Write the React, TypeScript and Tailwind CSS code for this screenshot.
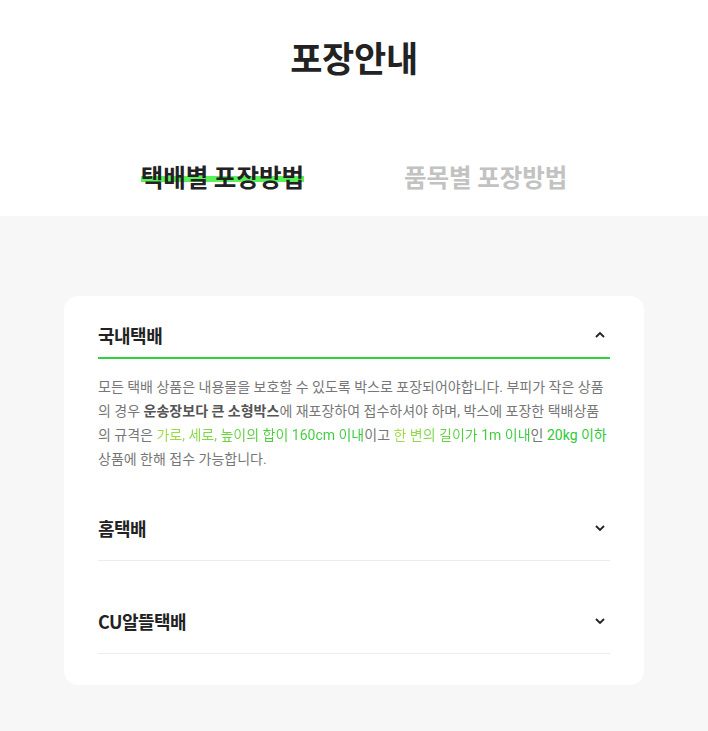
import React, { useState } from "react";

const KR = "font-['Noto_Sans_CJK_KR',sans-serif]";

const items = [
  { id: "domestic", title: "국내택배" },
  { id: "home", title: "홈택배" },
  { id: "cu", title: "CU알뜰택배" },
];

function Chevron({ open }: { open: boolean }) {
  return (
    <svg
      width="12"
      height="12"
      viewBox="0 0 12 12"
      fill="none"
      stroke="#222"
      strokeWidth="1.8"
      className={open ? "rotate-180" : ""}
    >
      <path d="M2 4l4 4 4-4" />
    </svg>
  );
}

export default function App() {
  const [tab, setTab] = useState(0);
  const [open, setOpen] = useState<string>("domestic");

  // highlighted spec text: soft yellow-green fading into green
  const green =
    "bg-gradient-to-r from-[#a6dc4c] via-[#4fcf3c] to-[#2fc93a] bg-clip-text text-transparent";

  return (
    <div className={`min-h-screen w-full bg-[#f7f7f7] ${KR}`}>
      {/* Top title + tabs */}
      <div className="bg-white">
        <h1 className="pt-[33px] text-center text-[35px] font-bold leading-[48px] tracking-[-0.3px] text-[#222]">
          포장안내
        </h1>
        <div className="mt-[75px] flex h-[60px] justify-center gap-[100px] pt-[4px]">
          {["택배별 포장방법", "품목별 포장방법"].map((t, i) => (
            <button
              key={t}
              onClick={() => setTab(i)}
              className={`relative h-fit text-[24.5px] font-bold leading-[34px] ${
                tab === i ? "text-[#222]" : "text-[#c2c2c2]"
              }`}
            >
              {tab === i && (
                <span className="absolute left-0 right-0 top-[16px] h-[6px] bg-[#5af05a]" />
              )}
              <span className="relative">{t}</span>
            </button>
          ))}
        </div>
      </div>

      {/* Accordion card */}
      <div className="px-[64px] pb-[46px] pt-[80px]">
        <div className="rounded-[14px] bg-white px-[34px] pb-[31px]">
          {items.map((item, idx) => {
            const isOpen = open === item.id;
            return (
              <div key={item.id}>
                <button
                  onClick={() => setOpen(isOpen ? "" : item.id)}
                  className={`flex w-full items-center justify-between ${
                    isOpen ? "pb-[9px]" : "pb-[19px]"
                  } ${idx === 0 ? "pt-[26px]" : idx === 1 ? "pt-[44px]" : "pt-[47px]"}`}
                >
                  <span className="text-[18px] font-bold leading-[26px] tracking-[-0.5px] text-[#222]">
                    {item.title}
                  </span>
                  <span className="mr-[4px]">
                    <Chevron open={isOpen} />
                  </span>
                </button>
                {isOpen ? (
                  <div className="h-[2px] w-full bg-[#2fd33e]" />
                ) : (
                  <div className="h-[1px] w-full bg-[#ececec]" />
                )}
                {isOpen && item.id === "domestic" && (
                  <p className="pt-[16px] font-['Roboto','Noto_Sans_CJK_KR',sans-serif] text-[14px] leading-[24px] text-[#777]">
                    모든 택배 상품은 내용물을 보호할 수 있도록 박스로 포장되어야합니다. 부피가 작은 상품의 경우{" "}
                    <b className="font-bold text-[#555]">운송장보다 큰 소형박스</b>에 재포장하여 접수하셔야 하며, 박스에 포장한 택배상품의 규격은{" "}
                    <span className={green}>가로, 세로, 높이의 합이 160cm 이내</span>이고{" "}
                    <span className={green}>한 변의 길이가 1m 이내</span>인{" "}
                    <span className="text-[#2fc93a]">20kg 이하</span> 상품에 한해 접수 가능합니다.
                  </p>
                )}
                {isOpen && item.id !== "domestic" && (
                  <p className="pt-[16px] text-[14px] leading-[24px] text-[#777]">
                    {item.title} 포장 안내 내용입니다.
                  </p>
                )}
              </div>
            );
          })}
        </div>
      </div>
    </div>
  );
}
